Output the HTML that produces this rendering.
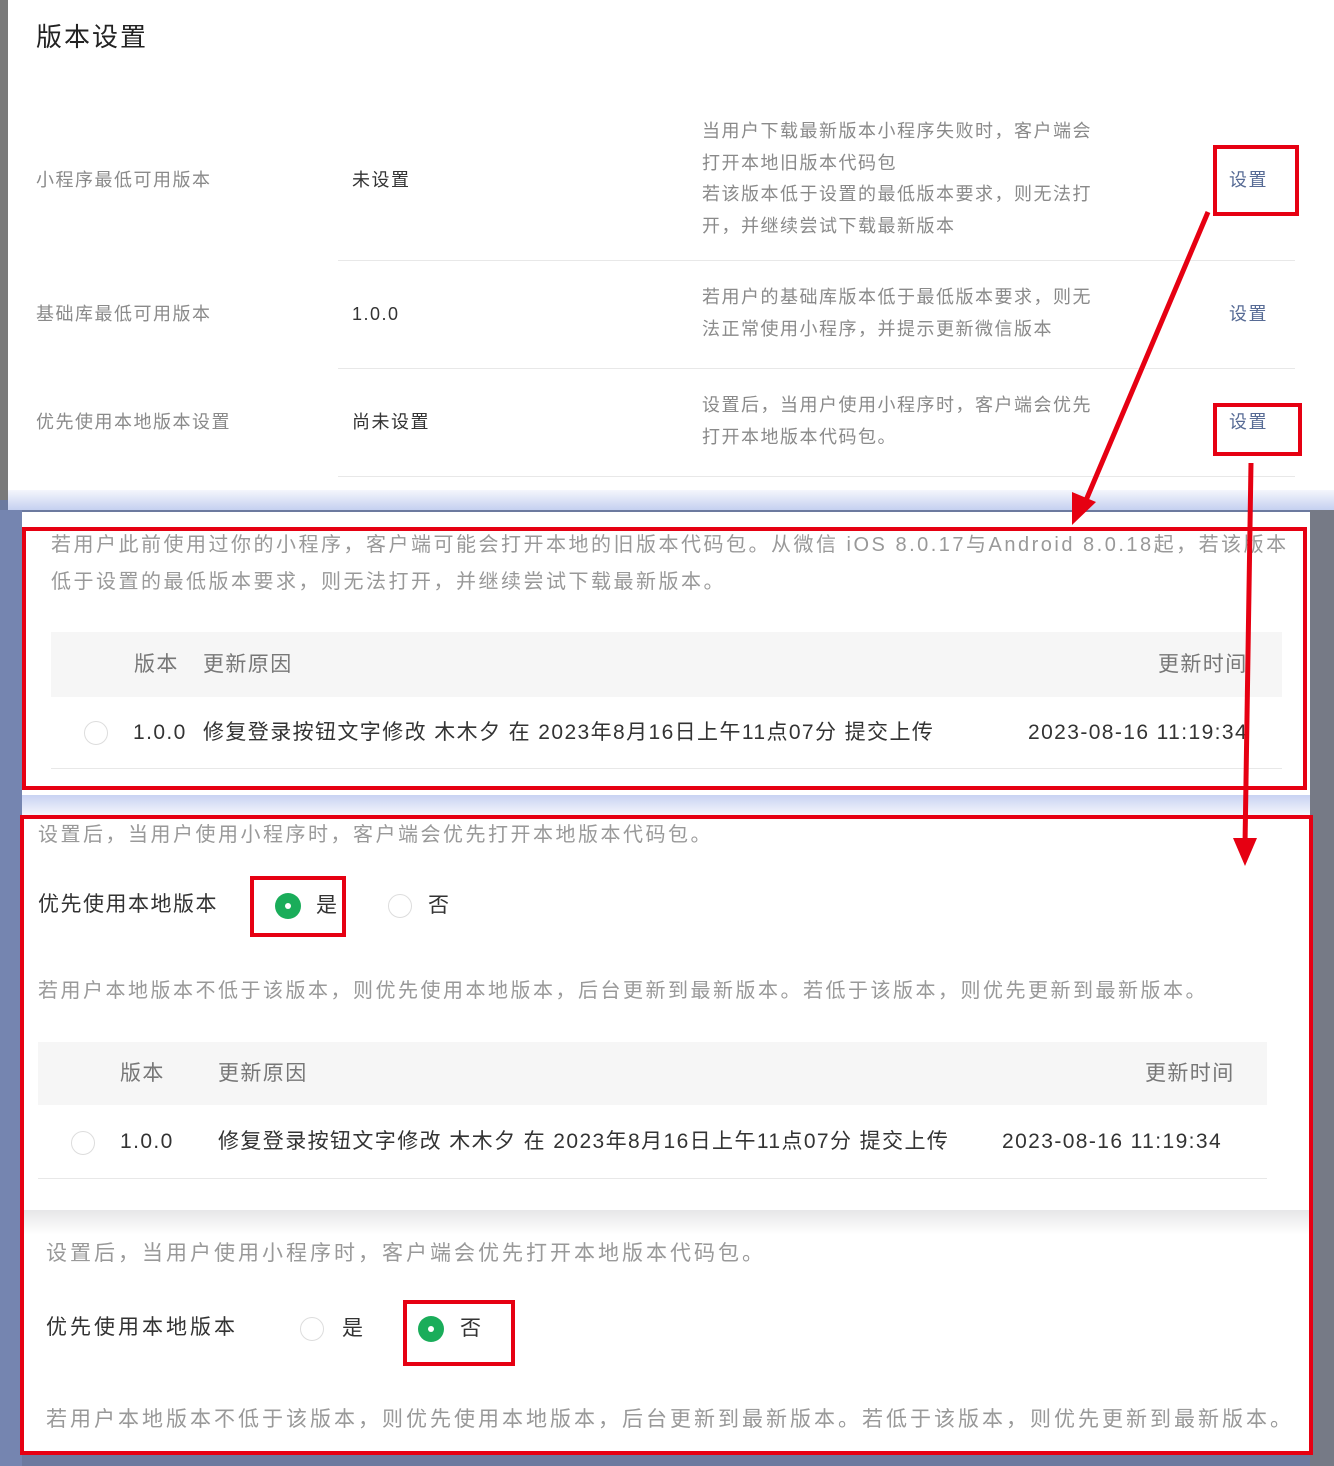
<!DOCTYPE html>
<html><head><meta charset="utf-8"><style>
*{margin:0;padding:0;box-sizing:border-box}
body{width:1334px;height:1466px;position:relative;overflow:hidden;background:#6c7a9f;font-family:"Liberation Sans","Noto Sans CJK SC",sans-serif}
.a{position:absolute;white-space:nowrap;line-height:1}
.p{position:absolute;background:#fff}
.g{color:#8a8a8a}
.d{color:#333}
.r{position:absolute;border:4px solid #e60012}
.rad{position:absolute;width:24px;height:24px;border:1px solid #ddd;border-radius:50%;background:#fff}
.on{position:absolute;width:26px;height:26px;border-radius:50%;background:#1aad5a}
.on:after{content:"";position:absolute;left:10px;top:10px;width:6px;height:6px;border-radius:50%;background:#fff}
.hl{position:absolute;height:1px;background:#e8e8e8}
.t18{font-size:18px;letter-spacing:1.5px}
.t20{font-size:20px;letter-spacing:2.5px}
.t21{font-size:21px;letter-spacing:1.4px}
.t21b{font-size:21px;letter-spacing:3px}
</style></head><body>
<div class="p" style="left:1310px;top:500px;width:24px;height:966px;background:#767a86"></div>
<!-- panel 1 -->
<div class="p" style="left:8px;top:0;width:1326px;height:500px"></div>
<div class="p" style="left:0;top:0;width:8px;height:500px;background:#7a7a7a"></div>
<div class="p" style="left:8px;top:490px;width:1326px;height:20px;background:linear-gradient(#f4f6fc,#c5d0f0)"></div>
<div class="a d" style="left:36px;top:24px;font-size:26px;letter-spacing:2px;color:#222">版本设置</div>
<div class="a g t18" style="left:36px;top:171px">小程序最低可用版本</div>
<div class="a d t18" style="left:352px;top:171px">未设置</div>
<div class="a g" style="left:702px;top:116px;font-size:18px;letter-spacing:1.5px;line-height:31.5px">当用户下载最新版本小程序失败时，客户端会<br>打开本地旧版本代码包<br>若该版本低于设置的最低版本要求，则无法打<br>开，并继续尝试下载最新版本</div>
<div class="a t18" style="left:1229px;top:171px;color:#576b95">设置</div>
<div class="hl" style="left:338px;top:260px;width:957px"></div>
<div class="a g t18" style="left:36px;top:305px">基础库最低可用版本</div>
<div class="a d t18" style="left:352px;top:305px">1.0.0</div>
<div class="a g" style="left:702px;top:282px;font-size:18px;letter-spacing:1.5px;line-height:31.5px">若用户的基础库版本低于最低版本要求，则无<br>法正常使用小程序，并提示更新微信版本</div>
<div class="a t18" style="left:1229px;top:305px;color:#576b95">设置</div>
<div class="hl" style="left:338px;top:368px;width:957px"></div>
<div class="a g t18" style="left:36px;top:413px">优先使用本地版本设置</div>
<div class="a d t18" style="left:352px;top:413px">尚未设置</div>
<div class="a g" style="left:702px;top:390px;font-size:18px;letter-spacing:1.5px;line-height:31.5px">设置后，当用户使用小程序时，客户端会优先<br>打开本地版本代码包。</div>
<div class="a t18" style="left:1229px;top:413px;color:#576b95">设置</div>
<div class="hl" style="left:338px;top:476px;width:957px"></div>
<div class="r" style="left:1213px;top:145px;width:86px;height:71px"></div>
<div class="r" style="left:1213px;top:403px;width:89px;height:53px"></div>
<!-- panel 2 -->
<div class="p" style="left:0;top:510px;width:22px;height:956px;background:#7585b0"></div>
<div class="p" style="left:22px;top:512px;width:1288px;height:283px;overflow:hidden">
<div class="a t20" style="left:29px;top:23px;color:#999">若用户此前使用过你的小程序，客户端可能会打开本地的旧版本代码包。从微信 iOS 8.0.17与Android 8.0.18起，若该版本</div>
</div>
<div class="p" style="left:22px;top:795px;width:1288px;height:20px;background:linear-gradient(#c8d2f2,#f4f6fc)"></div>
<div class="a t20" style="left:51px;top:572px;color:#999">低于设置的最低版本要求，则无法打开，并继续尝试下载最新版本。</div>
<div class="p" style="left:51px;top:632px;width:1231px;height:65px;background:#f6f6f6"></div>
<div class="a t21" style="left:134px;top:654px;color:#777">版本</div>
<div class="a t21" style="left:203px;top:654px;color:#777">更新原因</div>
<div class="a t21" style="left:1158px;top:654px;color:#777">更新时间</div>
<div class="rad" style="left:84px;top:721px"></div>
<div class="a d t21" style="left:133px;top:722px">1.0.0</div>
<div class="a d t21" style="left:203px;top:722px">修复登录按钮文字修改 木木夕 在 2023年8月16日上午11点07分 提交上传</div>
<div class="a d t21" style="left:1028px;top:722px">2023-08-16 11:19:34</div>
<div class="hl" style="left:51px;top:768px;width:1231px"></div>
<div class="r" style="left:22px;top:527px;width:1285px;height:263px"></div>
<!-- panel 3 -->
<div class="p" style="left:22px;top:815px;width:1288px;height:395px"></div>
<div class="a t20" style="left:38px;top:825px;color:#999">设置后，当用户使用小程序时，客户端会优先打开本地版本代码包。</div>
<div class="a d" style="left:38px;top:894px;font-size:21px;letter-spacing:1.5px">优先使用本地版本</div>
<div class="on" style="left:275px;top:893px"></div>
<div class="a d t21" style="left:316px;top:895px">是</div>
<div class="rad" style="left:388px;top:894px"></div>
<div class="a d t21" style="left:428px;top:895px">否</div>
<div class="a t20" style="left:38px;top:981px;color:#999">若用户本地版本不低于该版本，则优先使用本地版本，后台更新到最新版本。若低于该版本，则优先更新到最新版本。</div>
<div class="p" style="left:38px;top:1042px;width:1229px;height:63px;background:#f6f6f6"></div>
<div class="a t21" style="left:120px;top:1063px;color:#777">版本</div>
<div class="a t21" style="left:218px;top:1063px;color:#777">更新原因</div>
<div class="a t21" style="left:1145px;top:1063px;color:#777">更新时间</div>
<div class="rad" style="left:71px;top:1131px"></div>
<div class="a d t21" style="left:120px;top:1131px">1.0.0</div>
<div class="a d t21" style="left:218px;top:1131px">修复登录按钮文字修改 木木夕 在 2023年8月16日上午11点07分 提交上传</div>
<div class="a d t21" style="left:1002px;top:1131px">2023-08-16 11:19:34</div>
<div class="hl" style="left:38px;top:1178px;width:1229px"></div>
<!-- panel 4 -->
<div class="p" style="left:22px;top:1210px;width:1288px;height:242px;background:linear-gradient(#e6e6e8,#fff 25px)"></div>
<div class="a t21b" style="left:46px;top:1243px;color:#999">设置后，当用户使用小程序时，客户端会优先打开本地版本代码包。</div>
<div class="a d t21b" style="left:46px;top:1317px">优先使用本地版本</div>
<div class="rad" style="left:300px;top:1317px"></div>
<div class="a d t21" style="left:342px;top:1318px">是</div>
<div class="on" style="left:418px;top:1316px"></div>
<div class="a d t21" style="left:460px;top:1318px">否</div>
<div class="a t21b" style="left:46px;top:1409px;color:#999">若用户本地版本不低于该版本，则优先使用本地版本，后台更新到最新版本。若低于该版本，则优先更新到最新版本。</div>
<div class="r" style="left:20px;top:815px;width:1293px;height:640px"></div>
<div class="r" style="left:250px;top:876px;width:96px;height:61px"></div>
<div class="r" style="left:403px;top:1300px;width:112px;height:66px"></div>
<svg style="position:absolute;left:0;top:0" width="1334" height="1466">
<line x1="1208" y1="212" x2="1084" y2="505" stroke="#e60012" stroke-width="5"/>
<polygon points="1072,525 1072,492 1096,502" fill="#e60012"/>
<line x1="1251" y1="463" x2="1245" y2="845" stroke="#e60012" stroke-width="5"/>
<polygon points="1233,838 1257,838 1245,866" fill="#e60012"/>
</svg>
</body></html>
